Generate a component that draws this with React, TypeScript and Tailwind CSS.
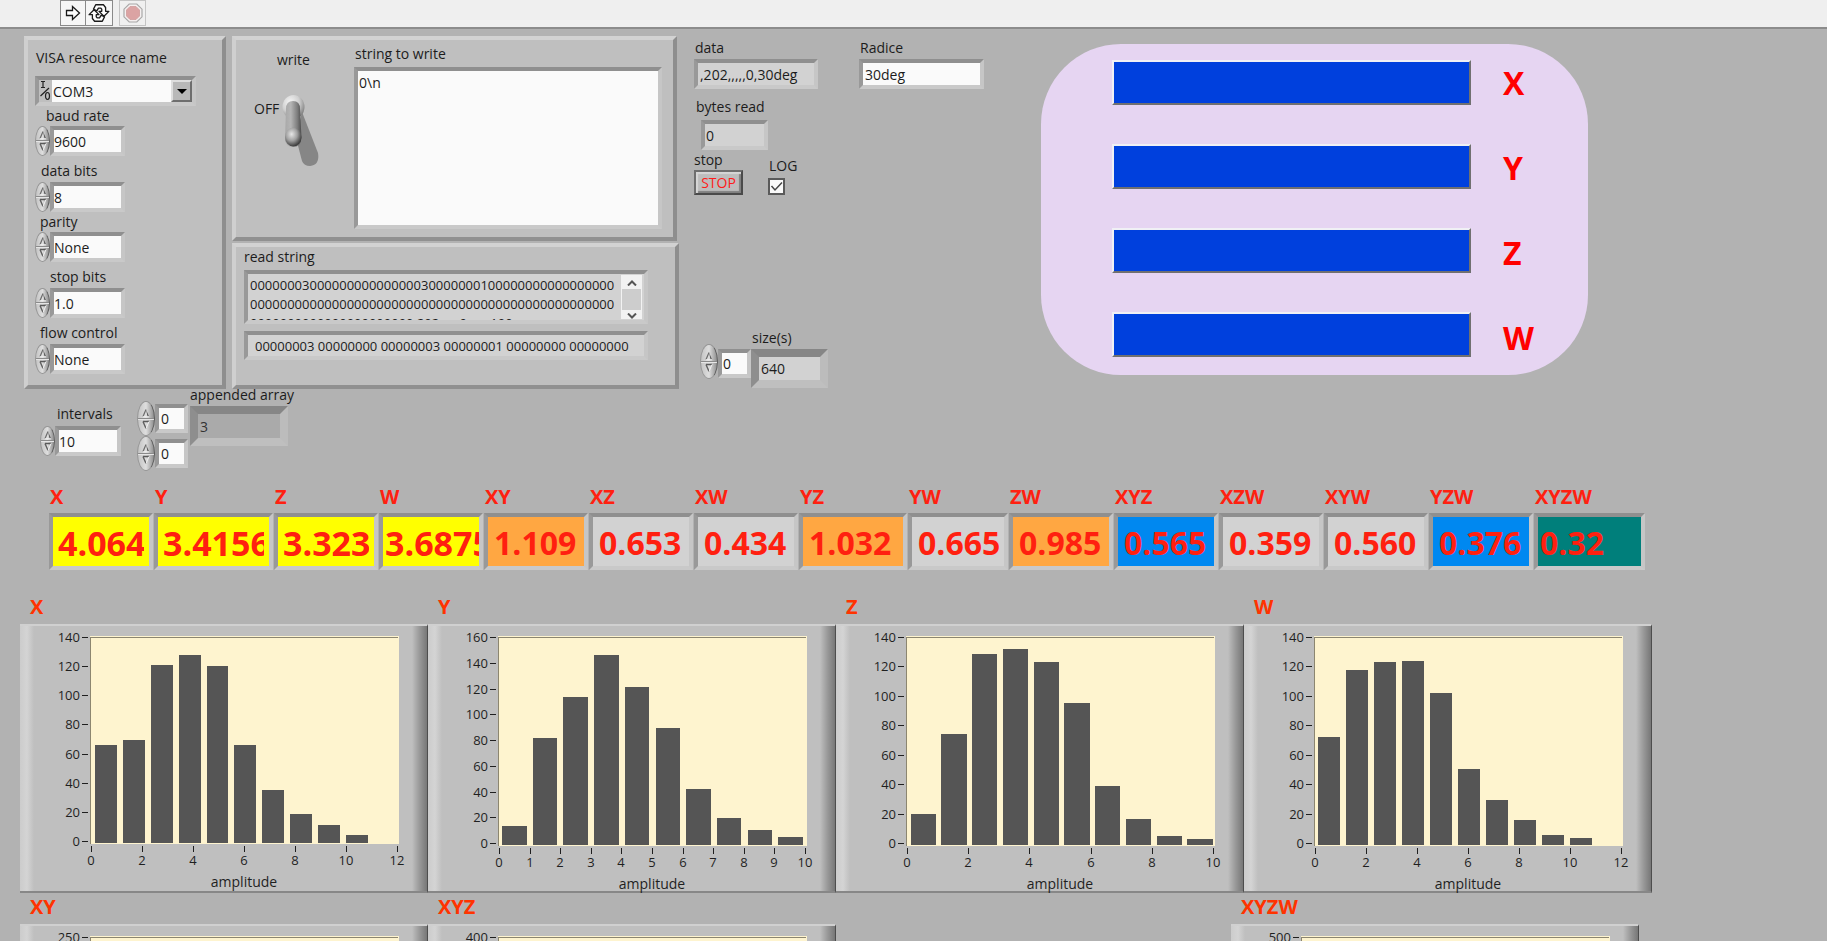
import { useState } from "react";
import type { ReactNode } from "react";

const SUNKEN =
  "border-4 border-t-[#8f8f8f] border-l-[#999999] border-r-[#c6c6c6] border-b-[#c9c9c9]";
const SUNKEN_DEEP =
  "border-8 border-t-[#868686] border-l-[#8e8e8e] border-r-[#bcbcbc] border-b-[#bfbfbf]";

function Panel({ className, children }: { className: string; children: ReactNode }) {
  return (
    <section
      className={`border-4 border-t-[#d2d2d2] border-l-[#cfcfcf] border-r-[#8e8e8e] border-b-[#909090] bg-[#bfbfbf] ${className}`}
    >
      {children}
    </section>
  );
}

function Stepper({ label, className }: { label: string; className: string }) {
  return (
    <div
      className={`flex shrink-0 flex-col overflow-hidden rounded-[50%] border border-[#969696] border-r-[#5c5c5c] bg-linear-to-r from-[#c4c4c4] via-[#dedede] to-[#8f8f8f] ${className}`}
    >
      <button
        type="button"
        aria-label={`Increase ${label}`}
        className="flex flex-1 items-end justify-center border-b border-[#8a8a8a]"
      >
        <svg viewBox="0 0 8 10" className="h-[10px] w-[8px]">
          <path d="M1 8.500 4 1.500" stroke="#6b6b6b" strokeWidth="1.200" fill="none" />
          <path d="M4 1.500 7 8.500H5.600Z" fill="#4f4f4f" />
          <path d="M1 8.800h6" stroke="#f2f2f2" strokeWidth="1" />
        </svg>
      </button>
      <button
        type="button"
        aria-label={`Decrease ${label}`}
        className="flex flex-1 items-start justify-center border-t border-[#e6e6e6]"
      >
        <svg viewBox="0 0 8 10" className="h-[10px] w-[8px]">
          <path d="M1 1.500h6" stroke="#5a5a5a" strokeWidth="1.400" />
          <path d="M1 1.500 4 8.500" stroke="#5f5f5f" strokeWidth="1.400" fill="none" />
          <path d="M4 8.500 7 1.500" stroke="#f2f2f2" strokeWidth="1" fill="none" />
        </svg>
      </button>
    </div>
  );
}

function SerialField({
  id,
  label,
  value,
  indent,
  gap,
}: {
  id: string;
  label: string;
  value: string;
  indent: string;
  gap: string;
}) {
  return (
    <div className={gap}>
      <label htmlFor={id} className={`block leading-5 ${indent}`}>
        {label}
      </label>
      <div className="flex h-[30px]">
        <Stepper label={label} className="w-[15px]" />
        <input
          id={id}
          defaultValue={value}
          className={`w-[75px] bg-[#fafafa] ${SUNKEN}`}
        />
      </div>
    </div>
  );
}

function ToggleSwitch() {
  const [on, setOn] = useState(false);
  return (
    <button type="button" aria-label="write" aria-pressed={on} onClick={() => setOn(!on)}>
      <svg viewBox="0 0 38 74" className="h-[74px] w-[38px]">
        <defs>
          <radialGradient id="base" cx="0.35" cy="0.3" r="0.75">
            <stop offset="0" stopColor="#f5f5f5" />
            <stop offset="0.55" stopColor="#cfcfcf" />
            <stop offset="1" stopColor="#7d7d7d" />
          </radialGradient>
          <linearGradient id="stem" x1="0" x2="1">
            <stop offset="0" stopColor="#a8a8a8" />
            <stop offset="0.35" stopColor="#b5b5b5" />
            <stop offset="0.75" stopColor="#7d7d7d" />
            <stop offset="1" stopColor="#4a4a4a" />
          </linearGradient>
          <radialGradient id="tip" cx="0.4" cy="0.35" r="0.7">
            <stop offset="0" stopColor="#e6e6e6" />
            <stop offset="0.5" stopColor="#a0a0a0" />
            <stop offset="1" stopColor="#2b2b2b" />
          </radialGradient>
        </defs>
        <path d="M14 44 20 18 36 59Q38 71 28 72 22 72 20 67Z" fill="#868686" />
        <ellipse cx="11.500" cy="13" rx="11" ry="12" fill="url(#base)" />
        <path d="M4 15Q4 7 11 7T18 15L19.500 44Q19 53 11 53T3 44Z" fill="url(#stem)" />
        <ellipse cx="11.200" cy="43" rx="8.200" ry="9.500" fill="url(#tip)" />
      </svg>
    </button>
  );
}

type HistogramData = {
  name: string;
  yMax: number;
  yStep: number;
  xMax: number;
  xStep: number;
  baseline: number;
  first: number;
  pitch: number;
  barWidth: number;
  values: number[];
};

const PLOT_LEFT = 57;
const PLOT_WIDTH = 306;
const PLOT_TOP = 12;

function ticks(max: number, step: number) {
  return Array.from({ length: Math.floor(max / step) + 1 }, (_, i) => i * step);
}

function Histogram({ data, className }: { data: HistogramData; className: string }) {
  const { yMax, yStep, xMax, xStep, baseline, first, pitch, barWidth, values } = data;
  const y = (v: number) => Math.round(baseline - (v / yMax) * (baseline - PLOT_TOP));
  const x = (v: number) => Math.round(PLOT_LEFT + (v / xMax) * PLOT_WIDTH);
  return (
    <figure className={className}>
      <figcaption className="mb-[3px] pl-[10px] text-[20px] leading-7 font-bold text-[#ff3300]">
        {data.name}
      </figcaption>
      <div className="flex h-[269px] border-t-2 border-r border-b-2 border-t-[#d0d0d0] border-r-[#4d4d4d] border-b-[#878787] bg-[#bfbfbf]">
        <div className="w-[14px] shrink-0 bg-linear-to-r from-[#cccccc] via-[#d4d4d4] to-[#bfbfbf]" />
        <svg
          viewBox="0 0 378 265"
          className="h-[265px] min-w-0 flex-1 overflow-visible text-[13px]"
          fill="#1f1f1f"
          role="img"
          aria-label={`${data.name} amplitude histogram`}
        >
          <rect
            x={PLOT_LEFT - 1}
            y={PLOT_TOP - 2}
            width={PLOT_WIDTH + 3}
            height={baseline - PLOT_TOP + 4}
            fill="#fef4cf"
          />
          <path
            d={`M${PLOT_LEFT - 1} ${baseline + 2}V${PLOT_TOP - 1}H${PLOT_LEFT + PLOT_WIDTH + 1}`}
            stroke="#8c8670"
            strokeWidth="1"
            fill="none"
            shapeRendering="crispEdges"
          />
          {values.map((v, i) => {
            const left = x(first + i * pitch - barWidth / 2);
            const right = x(first + i * pitch + barWidth / 2);
            return (
              <rect
                key={i}
                x={left}
                y={y(v)}
                width={right - left}
                height={baseline + 1 - y(v)}
                fill="#555555"
              />
            );
          })}
          {ticks(yMax, yStep).map((t) => (
            <g key={t}>
              <rect x={PLOT_LEFT - 9} y={y(t) - 1} width="6" height="1" />
              <text x={PLOT_LEFT - 11} y={y(t) + 4} textAnchor="end">
                {t}
              </text>
            </g>
          ))}
          {ticks(xMax, xStep).map((t) => (
            <g key={t}>
              <rect x={x(t)} y={baseline + 4} width="1" height="6" />
              <text x={x(t)} y={baseline + 23} textAnchor="middle">
                {t}
              </text>
            </g>
          ))}
          <text
            x={PLOT_LEFT + PLOT_WIDTH / 2}
            y={baseline + 45}
            textAnchor="middle"
            className="text-[14px]"
          >
            amplitude
          </text>
        </svg>
        <div className="w-[15px] shrink-0 bg-linear-to-r from-[#bfbfbf] via-[#999999] to-[#777777]" />
      </div>
    </figure>
  );
}

const HISTOGRAMS: HistogramData[] = [
  {
    name: "X", yMax: 140, yStep: 20, xMax: 12, xStep: 2, baseline: 216,
    first: 0.58, pitch: 1.095, barWidth: 0.86,
    values: [66.6, 70, 121.5, 128.4, 120.8, 66.6, 35.7, 19.2, 11.7, 4.6],
  },
  {
    name: "Y", yMax: 160, yStep: 20, xMax: 10, xStep: 1, baseline: 218,
    first: 0.5, pitch: 1.003, barWidth: 0.8,
    values: [14, 82, 114, 147, 122, 90, 42.5, 20, 10.5, 5.5],
  },
  {
    name: "Z", yMax: 140, yStep: 20, xMax: 10, xStep: 2, baseline: 218,
    first: 0.53, pitch: 1.005, barWidth: 0.82,
    values: [20.5, 75, 129, 132.5, 124, 96, 39.5, 17, 5.5, 3.5],
  },
  {
    name: "W", yMax: 140, yStep: 20, xMax: 12, xStep: 2, baseline: 218,
    first: 0.56, pitch: 1.098, barWidth: 0.86,
    values: [73, 118, 124, 124.6, 102.5, 51, 29.7, 16, 6, 4],
  },
];

const emptyHistogram = (name: string, yMax: number, yStep: number): HistogramData => ({
  name, yMax, yStep, xMax: 12, xStep: 2, baseline: 218,
  first: 0.5, pitch: 1, barWidth: 0.8, values: [],
});

const READOUTS = [
  { name: "X", value: "4.064", style: "bg-[#ffff00] px-[5px] text-[34px]" },
  { name: "Y", value: "3.4156", style: "bg-[#ffff00] px-[5px] text-[34px]" },
  { name: "Z", value: "3.323", style: "bg-[#ffff00] px-[5px] text-[34px]" },
  { name: "W", value: "3.6875", style: "bg-[#ffff00] pl-[2px] text-[34px]" },
  { name: "XY", value: "1.109", style: "bg-[#ffa742] pl-[6px] text-[32px]" },
  { name: "XZ", value: "0.653", style: "bg-[#d2d2d2] pl-[6px] text-[32px]" },
  { name: "XW", value: "0.434", style: "bg-[#d2d2d2] pl-[6px] text-[32px]" },
  { name: "YZ", value: "1.032", style: "bg-[#ffa742] pl-[6px] text-[32px]" },
  { name: "YW", value: "0.665", style: "bg-[#d2d2d2] pl-[6px] text-[32px]" },
  { name: "ZW", value: "0.985", style: "bg-[#ffa742] pl-[6px] text-[32px]" },
  { name: "XYZ", value: "0.565", style: "bg-[#0088f0] pl-[6px] text-[32px]" },
  { name: "XZW", value: "0.359", style: "bg-[#d2d2d2] pl-[6px] text-[32px]" },
  { name: "XYW", value: "0.560", style: "bg-[#d2d2d2] pl-[6px] text-[32px]" },
  { name: "YZW", value: "0.376", style: "bg-[#0088f0] pl-[6px] text-[32px]" },
  { name: "XYZW", value: "0.32", style: "bg-[#007f7b] pl-[2px] text-[32px]" },
];

const READ_STRING = [
  "0000000300000000000000030000000100000000000000000",
  "0000000000000000000000000000000000000000000000000",
  "0000000000000000000000,202,,,,,,0,,,,,,,100",
].join("\n");

function Toolbar() {
  return (
    <header className="flex h-[29px] border-b-2 border-[#8c8c8c] bg-[#efefef] pl-[60px]">
      <button
        type="button"
        aria-label="Run"
        className="flex h-[26px] w-[26px] items-center justify-center border border-[#8a8a8a] bg-[#f6f6f6]"
      >
        <svg viewBox="0 0 16 16" className="size-4">
          <path d="M1.500 5.500H7.500V1.500L14.500 8 7.500 14.500V10.500H1.500Z" fill="#ffffff" stroke="#1a1a1a" strokeWidth="1.300" />
        </svg>
      </button>
      <button
        type="button"
        aria-label="Run continuously"
        className="flex h-[26px] w-[27px] items-center justify-center border border-l-0 border-[#8a8a8a] bg-[#f6f6f6]"
      >
        <svg viewBox="0 0 20 18" className="h-5 w-[22px]" fill="#ffffff" stroke="#1a1a1a" strokeWidth="1.200" strokeLinejoin="round">
          <path d="M5 5.500 7 1.500H14L16 4V7.500H19L14.500 12 10 7.500H12.500V5.500L11.500 4.500H9.500L8 7Z" />
          <path d="M15 12.500 13 16.500H6L4 14V10.500H1L5.500 6 10 10.500H7.500V12.500L8.500 13.500H10.500L12 11Z" />
        </svg>
      </button>
      <button
        type="button"
        aria-label="Abort"
        className="ml-[6px] flex h-[26px] w-[27px] items-center justify-center border border-[#c4c4c4] bg-[#f0f0f0]"
      >
        <svg viewBox="0 0 20 20" className="size-5">
          <path d="M6.200 1H13.800L19 6.200V13.800L13.800 19H6.200L1 13.800V6.200Z" fill="#f4efef" stroke="#a8a8a8" strokeWidth="1.200" />
          <path d="M7 3.500H13L16.500 7V13L13 16.500H7L3.500 13V7Z" fill="#dba3a3" stroke="#cf9c9c" strokeWidth="0.800" />
        </svg>
      </button>
    </header>
  );
}

function SerialPanel() {
  return (
    <Panel className="h-[353px] w-[202px] px-[7px] pt-2">
      <label htmlFor="visa" className="block pl-px leading-5">
        VISA resource name
      </label>
      <div className={`mt-2 flex h-[30px] w-[161px] bg-[#bfbfbf] ${SUNKEN}`}>
        <svg viewBox="0 0 13 22" className="h-[22px] w-[13px] shrink-0" fill="none" stroke="#222222" strokeWidth="1.200">
          <path d="M2 1.500H6M4 1.500V7.500M2 7.500H6M1.500 16 10 8" />
          <ellipse cx="8.500" cy="16" rx="2" ry="3.500" />
        </svg>
        <select
          id="visa"
          className="min-w-0 flex-1 appearance-none bg-[#fafafa] pl-px"
          defaultValue="COM3"
        >
          <option>COM3</option>
        </select>
        <span className="pointer-events-none flex w-[21px] shrink-0 items-center justify-center border-2 border-t-[#dedede] border-l-[#dedede] border-r-[#6e6e6e] border-b-[#6e6e6e] bg-[#b8b8b8]">
          <svg viewBox="0 0 10 5" className="h-[5px] w-[10px]">
            <path d="M0 0H10L5 5Z" fill="#000000" />
          </svg>
        </span>
      </div>
      <SerialField id="baud" label="baud rate" value="9600" indent="pl-[11px]" gap="mt-0" />
      <SerialField id="bits" label="data bits" value="8" indent="pl-[6px] pb-px" gap="mt-[5px]" />
      <SerialField id="parity" label="parity" value="None" indent="pl-[5px]" gap="mt-0" />
      <SerialField id="stopbits" label="stop bits" value="1.0" indent="pl-[15px] pb-px" gap="mt-[5px]" />
      <SerialField id="flow" label="flow control" value="None" indent="pl-[5px] pb-px" gap="mt-[5px]" />
    </Panel>
  );
}

function WritePanel() {
  return (
    <Panel className="flex h-[205px] w-[445px]">
      <div className="w-[118px] shrink-0 pt-[10px]">
        <div className="pl-[41px] leading-5">write</div>
        <div className="mt-6 flex items-start pl-[18px]">
          <span className="mt-[5px] w-7 leading-5">OFF</span>
          <ToggleSwitch />
        </div>
      </div>
      <div className="pt-1">
        <label htmlFor="towrite" className="block pl-px leading-5">
          string to write
        </label>
        <textarea
          id="towrite"
          defaultValue={"0\\n"}
          className={`mt-[3px] block h-[162px] w-[308px] resize-none bg-[#fafafa] pt-[2px] pl-px leading-5 ${SUNKEN}`}
        />
      </div>
    </Panel>
  );
}

function ReadPanel() {
  return (
    <Panel className="h-[146px] w-[447px] pl-2">
      <label htmlFor="readstring" className="block leading-5">
        read string
      </label>
      <div className={`mt-[3px] flex h-[54px] w-[404px] bg-[#d2d2d2] ${SUNKEN}`}>
        <textarea
          id="readstring"
          readOnly
          value={READ_STRING}
          className="block min-w-0 flex-1 resize-none overflow-hidden pt-[2px] pl-[2px] text-[13px] leading-[19px] whitespace-pre"
        />
        <div className="my-px mr-[2px] flex w-[21px] flex-col items-center justify-between bg-[#f2f2f2] px-px pt-[5px]">
          <svg viewBox="0 0 10 6" className="h-[6px] w-[10px]" fill="none" stroke="#555555" strokeWidth="2">
            <path d="M1 5.500 5 1.500 9 5.500" />
          </svg>
          <div className="h-[21px] w-full bg-[#cdcdcd]" />
          <svg viewBox="0 0 10 6" className="h-[6px] w-[10px]" fill="none" stroke="#555555" strokeWidth="2">
            <path d="M1 0.500 5 4.500 9 0.500" />
          </svg>
        </div>
      </div>
      <input
        readOnly
        aria-label="read string words"
        value="00000003 00000000 00000003 00000001 00000000 00000000"
        className={`mt-[7px] block h-[29px] w-[404px] bg-[#d2d2d2] pl-[7px] text-[13px] ${SUNKEN}`}
      />
    </Panel>
  );
}

function ArrayRow() {
  return (
    <div className="flex items-start pl-4">
      <div className="pt-[15px]">
        <label htmlFor="intervals" className="block pl-[17px] leading-5">
          intervals
        </label>
        <div className="mt-[2px] flex h-[30px]">
          <Stepper label="intervals" className="w-[15px]" />
          <input id="intervals" defaultValue="10" className={`w-[66px] bg-[#fafafa] ${SUNKEN}`} />
        </div>
      </div>
      <div className="ml-4 pt-3">
        {["row index", "column index"].map((name) => (
          <div key={name} className="flex h-[35px] items-center">
            <Stepper label={name} className="h-[35px] w-[18px]" />
            <input
              aria-label={name}
              defaultValue="0"
              className={`h-[29px] w-[33px] bg-[#fafafa] pl-[2px] ${SUNKEN}`}
            />
          </div>
        ))}
      </div>
      <div className="ml-[2px]">
        <label htmlFor="appended" className="block leading-3">
          appended array
        </label>
        <input
          id="appended"
          readOnly
          value="3"
          className={`mt-[5px] block h-[40px] w-[98px] bg-[#aaaaaa] pl-[2px] text-[#333333] ${SUNKEN_DEEP}`}
        />
      </div>
    </div>
  );
}

function StatusColumn() {
  return (
    <div className="ml-[15px] w-[290px] shrink-0 pt-[2px]">
      <div className="flex justify-between">
        <div>
          <label htmlFor="data" className="block pl-px leading-5">
            data
          </label>
          <input
            id="data"
            readOnly
            value=",202,,,,,0,30deg"
            className={`mt-px block h-[30px] w-[124px] bg-[#d2d2d2] pl-[2px] ${SUNKEN}`}
          />
        </div>
        <div>
          <label htmlFor="radice" className="block pl-px leading-5">
            Radice
          </label>
          <input
            id="radice"
            defaultValue="30deg"
            className={`mt-px block h-[30px] w-[125px] bg-[#fafafa] pl-[2px] ${SUNKEN}`}
          />
        </div>
      </div>
      <div className="mt-2">
        <label htmlFor="bytes" className="block pl-[2px] leading-5">
          bytes read
        </label>
        <input
          id="bytes"
          readOnly
          value="0"
          className={`mt-[3px] ml-[7px] block h-[30px] w-[67px] bg-[#d2d2d2] pl-px ${SUNKEN}`}
        />
      </div>
      <div className="flex items-start">
        <div>
          <div className="leading-5">stop</div>
          <button
            type="button"
            className="block h-[25px] w-[49px] border-2 border-t-[#6e6e6e] border-l-[#6e6e6e] border-r-[#4a4a4a] border-b-[#4a4a4a] bg-[#bdbdbd] text-[#ff1a1a] shadow-[inset_2px_2px_1px_#d6d6d6,inset_-2px_-2px_1px_#808080]"
          >
            STOP
          </button>
        </div>
        <div className="mt-[6px] ml-[25px]">
          <label htmlFor="log" className="block pl-px leading-5">
            LOG
          </label>
          <span className="mt-[2px] grid size-[17px]">
            <input
              id="log"
              type="checkbox"
              defaultChecked
              className="peer col-start-1 row-start-1 size-[17px] appearance-none border-2 border-[#5a5a5a] bg-[#fafafa]"
            />
            <svg
              viewBox="0 0 17 17"
              className="pointer-events-none invisible col-start-1 row-start-1 size-[17px] peer-checked:visible"
            >
              <path d="M3.500 8 7 12 14 4.500" fill="none" stroke="#444444" strokeWidth="1.500" />
            </svg>
          </span>
        </div>
      </div>
      <div className="mt-[133px] flex items-start pl-[6px]">
        <Stepper label="size index" className="mt-4 h-[35px] w-[18px]" />
        <input
          aria-label="size index"
          defaultValue="0"
          className={`mt-[21px] h-[29px] w-[33px] bg-[#fafafa] pl-px ${SUNKEN}`}
        />
        <div>
          <label htmlFor="size" className="block pl-px leading-5">
            size(s)
          </label>
          <input
            id="size"
            readOnly
            value="640"
            className={`mt-px block h-[39px] w-[77px] bg-[#d2d2d2] pl-[2px] ${SUNKEN_DEEP}`}
          />
        </div>
      </div>
    </div>
  );
}

const LAMPS = ["X", "Y", "Z", "W"];

function SignalLamps() {
  return (
    <div className="mt-2 ml-[57px] flex w-full max-w-[547px] items-start gap-8 rounded-[80px] bg-[#e6d5f2] pt-4 pb-[15px] pl-[71px]">
      <div className="flex flex-col gap-[39px]">
        {LAMPS.map((name) => (
          <div
            key={name}
            className="h-[45px] w-[359px] border-2 border-t-[#f0f0f5] border-l-[#f0f0f5] border-r-[#707070] border-b-[#707070] bg-[#0040dd]"
          />
        ))}
      </div>
      <div className="flex flex-col gap-10 text-[32px] leading-[46px] font-bold text-[#ff0000]">
        {LAMPS.map((name) => (
          <span key={name} className="h-[45px]">
            {name}
          </span>
        ))}
      </div>
    </div>
  );
}

export default function App() {
  return (
    <div className="h-screen overflow-hidden bg-[#b2b2b2] font-['Open_Sans','Noto_Sans',sans-serif] text-[14px] text-[#1c1c1c]">
      <Toolbar />
      <main className="pt-[7px]">
        <div className="flex items-start pl-6">
          <div className="shrink-0">
            <div className="flex gap-[6px]">
              <SerialPanel />
              <div className="flex flex-col gap-[2px]">
                <WritePanel />
                <ReadPanel />
              </div>
            </div>
            <ArrayRow />
          </div>
          <StatusColumn />
          <SignalLamps />
        </div>

        <div className="mt-3 ml-[49px] grid max-w-[1597px] grid-cols-[105fr_120fr_105fr_105fr_105fr_105fr_105fr_109fr_101fr_105fr_105fr_105fr_105fr_105fr_112fr]">
          {READOUTS.map((r) => (
            <div key={r.name} className="min-w-0 pr-px">
              <label
                htmlFor={`readout-${r.name}`}
                className="mb-[2px] block pl-px text-[20px] leading-7 font-bold text-[#ff2010]"
              >
                {r.name}
              </label>
              <input
                id={`readout-${r.name}`}
                readOnly
                value={r.value}
                className={`block h-[57px] w-full pt-[2px] leading-none font-bold text-[#ff2010] ${SUNKEN} ${r.style}`}
              />
            </div>
          ))}
        </div>

        <div className="mt-[23px] ml-5 flex max-w-[1632px]">
          {HISTOGRAMS.map((h) => (
            <Histogram key={h.name} data={h} className="w-1/4" />
          ))}
        </div>
        <div className="ml-5 flex max-w-[1632px]">
          <Histogram data={emptyHistogram("XY", 250, 50)} className="w-1/4" />
          <Histogram data={emptyHistogram("XYZ", 400, 50)} className="w-1/4" />
          <Histogram data={emptyHistogram("XYZW", 500, 100)} className="mr-[13px] ml-auto w-1/4" />
        </div>
      </main>
    </div>
  );
}
